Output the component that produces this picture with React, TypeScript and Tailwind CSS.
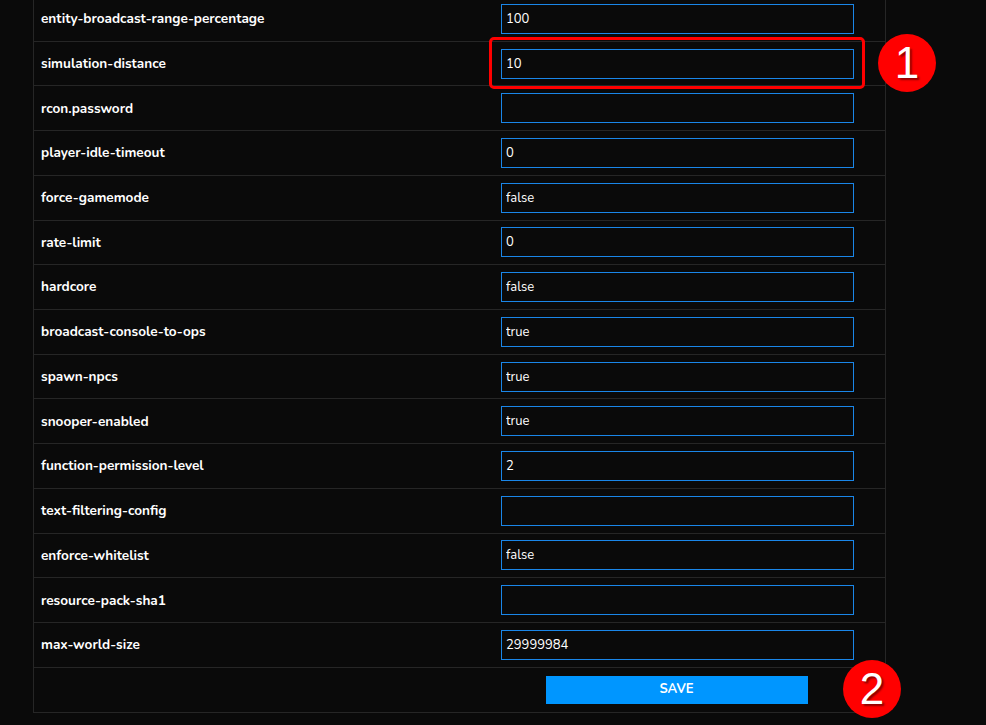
import React from "react";

interface Prop {
  key: string;
  value: string;
}

const props: Prop[] = [
  { key: "entity-broadcast-range-percentage", value: "100" },
  { key: "simulation-distance", value: "10" },
  { key: "rcon.password", value: "" },
  { key: "player-idle-timeout", value: "0" },
  { key: "force-gamemode", value: "false" },
  { key: "rate-limit", value: "0" },
  { key: "hardcore", value: "false" },
  { key: "broadcast-console-to-ops", value: "true" },
  { key: "spawn-npcs", value: "true" },
  { key: "snooper-enabled", value: "true" },
  { key: "function-permission-level", value: "2" },
  { key: "text-filtering-config", value: "" },
  { key: "enforce-whitelist", value: "false" },
  { key: "resource-pack-sha1", value: "" },
  { key: "max-world-size", value: "29999984" },
];

const font = { fontFamily: "Nunito, 'Noto Sans', 'Open Sans', sans-serif" };

// numbered red marker used to point out steps
const Marker = ({ n, className }: { n: string; className: string }) => (
  <div
    className={
      "absolute w-[58px] h-[58px] rounded-full bg-[#ff0000] flex items-center justify-center text-white text-[44px] leading-none [text-shadow:2px_2px_2px_rgba(0,0,0,0.45)] " +
      className
    }
    style={{ fontFamily: "'Liberation Sans', Arial, sans-serif" }}
  >
    {n}
  </div>
);

const App: React.FC = () => {
  return (
    <div className="relative w-[986px] h-[725px] overflow-hidden bg-[#0a0a0a] text-white" style={font}>
      <div className="ml-[33px] w-[853px] -mt-[3px] border-x border-b border-[#262626] bg-[#0a0a0a]">
        {props.map((p) => (
          <div
            key={p.key}
            className="h-[44.72px] box-border border-b border-[#262626] grid grid-cols-[460px_1fr] items-center"
          >
            <div className="pl-[7px] pt-[1px] text-[13.6px] font-bold">{p.key}</div>
            <div className="pl-[7px]">
              <input
                readOnly
                value={p.value}
                className="w-[353px] h-[30px] border border-[#1a86e8] bg-[#0a0a0a] px-[4px] text-[13px] text-white outline-none"
                style={font}
              />
            </div>
          </div>
        ))}
        <div className="h-[44px] flex items-center">
          <div className="w-[460px]" />
          <div className="pl-[6px] w-[359px] flex justify-center">
            <button
              className="w-[262px] h-[28px] bg-[#0096ff] text-white text-[13px] font-bold"
              style={font}
            >
              SAVE
            </button>
          </div>
        </div>
      </div>

      <div className="absolute left-[489px] top-[37px] w-[376px] h-[52px] border-[3px] border-[#ff0000] rounded-[5px]" />
      <Marker n="1" className="left-[878px] top-[34px]" />
      <Marker n="2" className="left-[843px] top-[660px]" />
    </div>
  );
};

export default App;
